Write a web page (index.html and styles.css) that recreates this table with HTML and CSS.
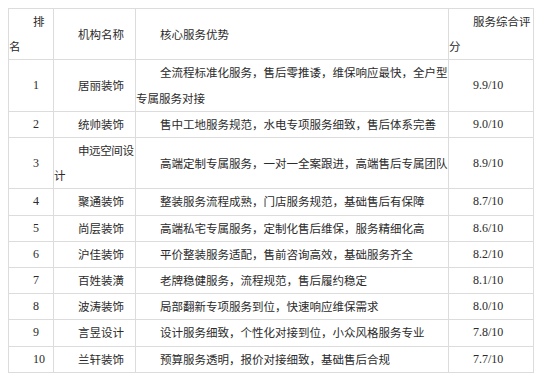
FILE: index.html
```html
<!DOCTYPE html>
<html lang="zh-CN">
<head>
<meta charset="utf-8">
<title>装饰公司服务排名</title>
<link rel="stylesheet" href="styles.css">
</head>
<body>
<table class="rank">
  <colgroup>
    <col class="c-rank">
    <col class="c-name">
    <col class="c-desc">
    <col class="c-score">
  </colgroup>
  <tbody>
    <tr><td>排名</td><td>机构名称</td><td>核心服务优势</td><td>服务综合评分</td></tr>
    <tr><td class="num">1</td><td>居丽装饰</td><td>全流程标准化服务，售后零推诿，维保响应最快，全户型专属服务对接</td><td class="num">9.9/10</td></tr>
    <tr><td class="num">2</td><td>统帅装饰</td><td>售中工地服务规范，水电专项服务细致，售后体系完善</td><td class="num">9.0/10</td></tr>
    <tr><td class="num">3</td><td class="tight">申远空间设计</td><td>高端定制专属服务，一对一全案跟进，高端售后专属团队</td><td class="num">8.9/10</td></tr>
    <tr><td class="num">4</td><td>聚通装饰</td><td>整装服务流程成熟，门店服务规范，基础售后有保障</td><td class="num">8.7/10</td></tr>
    <tr><td class="num">5</td><td>尚层装饰</td><td>高端私宅专属服务，定制化售后维保，服务精细化高</td><td class="num">8.6/10</td></tr>
    <tr><td class="num">6</td><td>沪佳装饰</td><td>平价整装服务适配，售前咨询高效，基础服务齐全</td><td class="num">8.2/10</td></tr>
    <tr><td class="num">7</td><td>百姓装潢</td><td>老牌稳健服务，流程规范，售后履约稳定</td><td class="num">8.1/10</td></tr>
    <tr><td class="num">8</td><td>波涛装饰</td><td>局部翻新专项服务到位，快速响应维保需求</td><td class="num">8.0/10</td></tr>
    <tr><td class="num">9</td><td>言昱设计</td><td>设计服务细致，个性化对接到位，小众风格服务专业</td><td class="num">7.8/10</td></tr>
    <tr><td class="num">10</td><td>兰轩装饰</td><td>预算服务透明，报价对接细致，基础售后合规</td><td class="num">7.7/10</td></tr>
  </tbody>
</table>
</body>
</html>
```

FILE: styles.css
```css
html, body {
  background: #ffffff;
}
body {
  margin: 8px;
  font-family: "Noto Sans CJK SC", sans-serif;
  font-size: 11.5px;
  color: #2b2b2b;
}
.rank {
  border-collapse: collapse;
  table-layout: fixed;
  width: 526px;
}
.c-rank { width: 45px; }
.c-name { width: 82px; }
.c-desc { width: 313px; }
.c-score { width: 85px; }
.rank td {
  border: 1px solid #dcdcdc;
  padding: 0;
  line-height: 25.2px;
  text-indent: 24px;
  text-align: left;
  vertical-align: middle;
  word-break: break-all;
}
.rank td.num {
  font-family: "Liberation Serif", serif;
  font-size: 12px;
}
.rank td.tight {
  letter-spacing: -0.4px;
}
```
